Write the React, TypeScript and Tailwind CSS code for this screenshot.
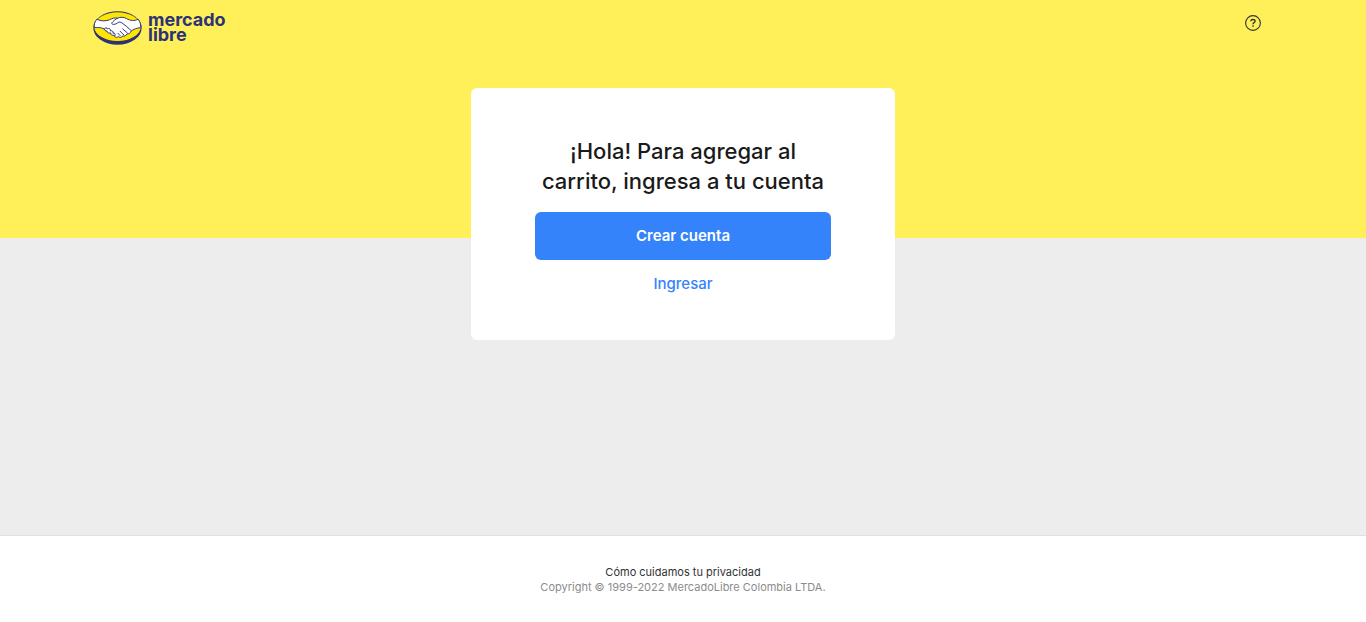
function HandshakeLogo() {
  return (
    <svg viewBox="0 0 150 104" className="h-[34px] w-[49px] shrink-0" aria-hidden="true">
      <ellipse cx="75" cy="52" rx="74" ry="51" fill="#2d3277" />
      <ellipse cx="75" cy="48" rx="71" ry="44" fill="#ffe600" />
      <path
        d="M12 25 C24 31 36 32 50 27 C60 22 66 20 75 22 C84 18 94 18 102 23 C114 30 127 31 138 25 C145 34 148 44 145 51 C134 52 124 56 117 61 C115 68 109 71 104 70 C101 76 96 78 92 76 C88 81 81 82 77 78 C72 83 65 80 64 74 C58 76 53 72 54 67 C48 69 42 66 43 61 C39 62 34 59 35 55 C28 51 17 50 5 51 C2 43 5 33 12 25 Z"
        fill="#fff"
        stroke="#2d3277"
        strokeWidth="3"
        strokeLinejoin="round"
      />
      <path
        d="M75 22 C68 26 62 31 57 37 C58 43 69 42 77 35 C81 33 85 34 88 36 C98 43 108 51 116 59 M35 55 C37 50 43 50 44 55 C49 51 55 55 53 61 C59 59 63 63 61 68 C67 66 70 71 67 76 M91 55 L105 67 M83 62 L94 73 M76 68 L83 75"
        fill="none"
        stroke="#2d3277"
        strokeWidth="3"
        strokeLinecap="round"
        strokeLinejoin="round"
      />
    </svg>
  );
}

function HelpIcon() {
  return (
    <svg viewBox="0 0 16 16" className="size-4" fill="none" stroke="#333333" aria-hidden="true">
      <circle cx="8" cy="8" r="7.4" strokeWidth="1.1" />
      <path d="M5.9 6.3 C5.9 3.9 10.1 3.9 10.1 6.3 C10.1 7.7 8 7.6 8 9.2" strokeWidth="1.3" />
      <path d="M8 10.3 V11.8" strokeWidth="1.4" />
    </svg>
  );
}

export default function App() {
  return (
    <div className="flex min-h-screen flex-col bg-[#ededed] font-['Inter','Liberation_Sans',sans-serif] text-[#1a1a1a]">
      <header className="h-[238px] bg-[#fff059]">
        <div className="mx-auto flex max-w-[1180px] items-start justify-between pr-3 pt-[11px]">
          <a href="#inicio" aria-label="Mercado Libre" className="flex items-start gap-[6px] text-[#2d3277]">
            <HandshakeLogo />
            <span className="flex flex-col pt-px text-[18px] font-bold leading-[15px]">
              <span>mercado</span>
              <span>libre</span>
            </span>
          </a>
          <a href="#ayuda" aria-label="Ayuda" className="pt-1">
            <HelpIcon />
          </a>
        </div>
      </header>

      <main className="-mt-[150px] flex grow justify-center px-4 pb-12">
        <section className="flex w-full max-w-[424px] flex-col self-start rounded-md bg-white px-16 pb-8 pt-12 text-center">
          <h1 className="text-[22px] font-medium leading-[30px]">
            ¡Hola! Para agregar al carrito, ingresa a tu cuenta
          </h1>
          <button type="button" className="mt-4 h-12 rounded-md bg-[#3483fa] text-[15px] font-semibold text-white">
            Crear cuenta
          </button>
          <button type="button" className="h-12 rounded-md text-[15px] font-medium text-[#3483fa]">
            Ingresar
          </button>
        </section>
      </main>

      <footer className="flex h-[87px] flex-col items-center border-t border-[#e0e0e0] bg-white pt-[29px] text-[11px] leading-[15px]">
        <a href="#privacidad" className="text-[#333333]">
          Cómo cuidamos tu privacidad
        </a>
        <small className="text-[11px] text-[#8c8c8c]">Copyright © 1999-2022 MercadoLibre Colombia LTDA.</small>
      </footer>
    </div>
  );
}
